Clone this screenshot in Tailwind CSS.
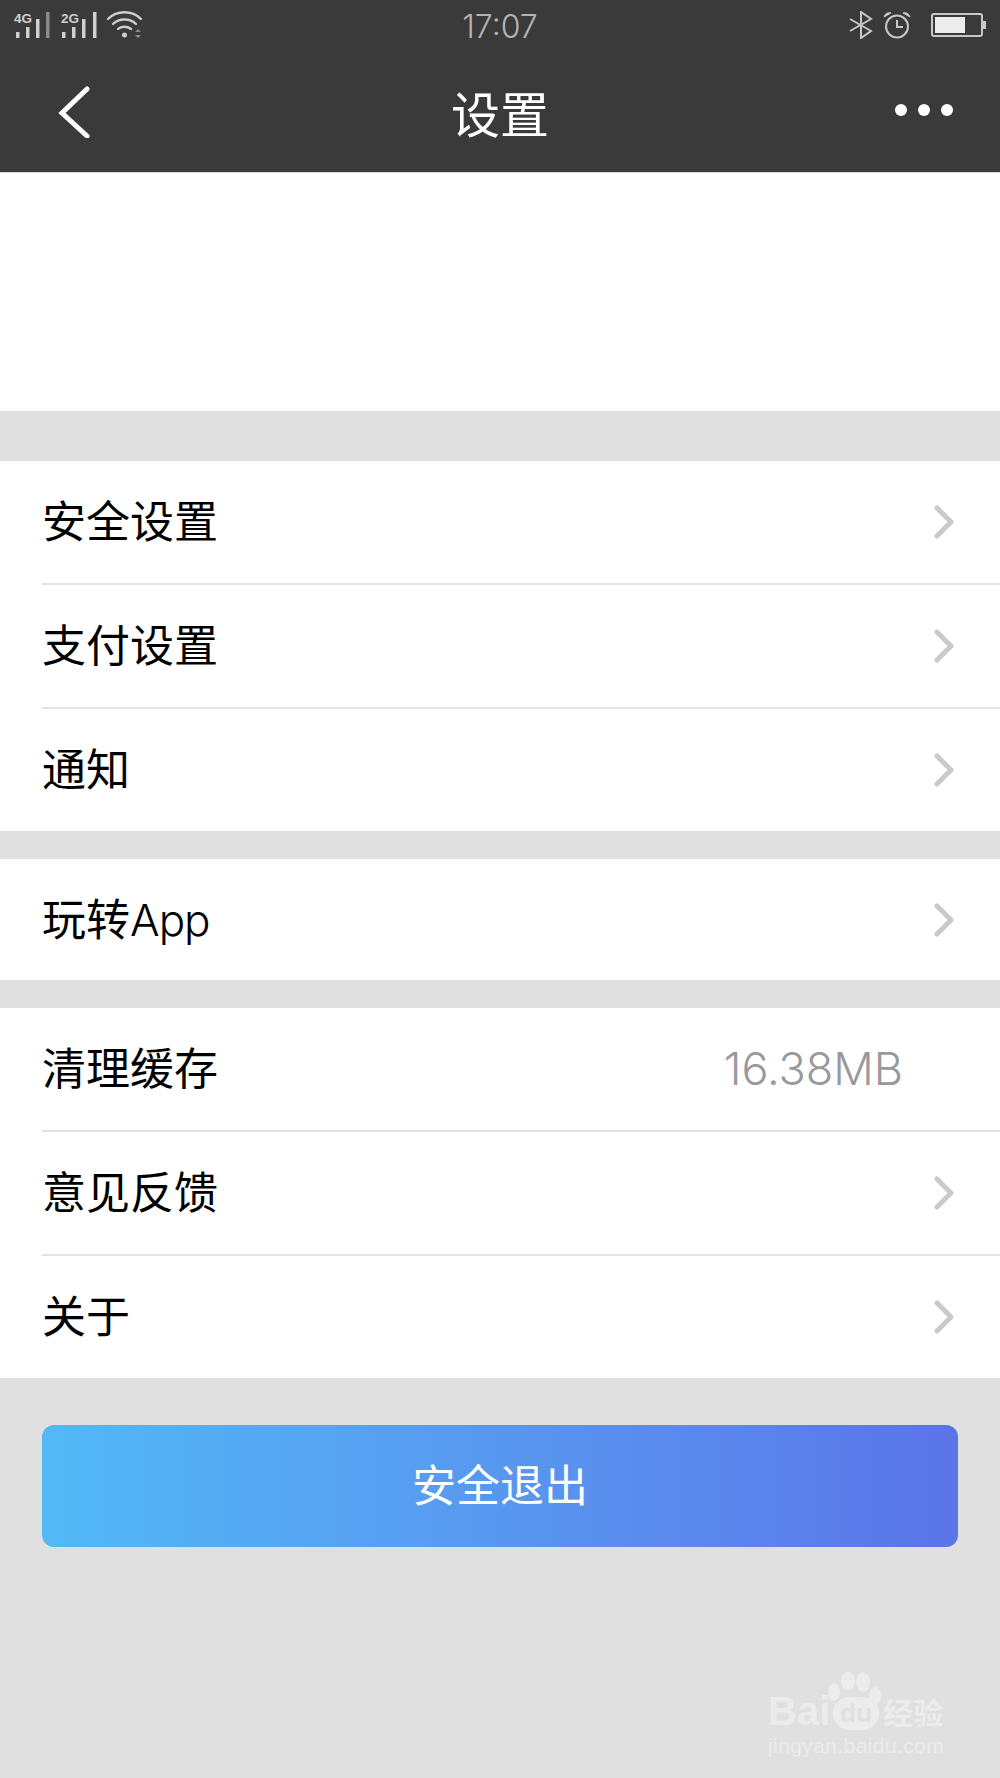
<!DOCTYPE html>
<html lang="zh">
<head>
    <meta charset="UTF-8">
    <title>设置</title>
    <script src="https://cdn.jsdelivr.net/npm/@tailwindcss/browser@4"></script>
</head>
<body>
<div class="relative w-[1000px] h-[1778px] bg-[#e0e0e0] overflow-hidden font-['Inter','Noto_Sans_CJK_SC',sans-serif]">

    <!-- status bar + title bar -->
    <header class="h-[173px] bg-[#3a3a3a] border-b border-[#d8d8d8] flex flex-col">
        <div class="h-[50px] px-[14px] flex items-center justify-between relative">
            <div class="flex items-center gap-[4px]">
                <svg width="88" height="30" viewBox="0 0 88 30" fill="#cfcfcf">
                    <text x="0" y="13" font-size="13.5" font-weight="600" font-family="Liberation Sans">4G</text>
                    <rect x="2" y="22" width="3.5" height="6"/><rect x="12" y="17" width="3.5" height="11"/><rect x="22" y="9" width="3.5" height="19"/><rect x="32" y="2" width="3.5" height="26" fill="#8a8a8a"/>
                    <text x="47" y="13" font-size="13.5" font-weight="600" font-family="Liberation Sans">2G</text>
                    <rect x="48" y="22" width="3.5" height="6"/><rect x="58" y="17" width="3.5" height="11"/><rect x="68" y="9" width="3.5" height="19"/><rect x="79" y="2" width="3.5" height="26"/>
                </svg>
                <svg width="38" height="30" viewBox="0 0 38 30" fill="none" stroke="#cfcfcf" stroke-width="2.4" stroke-linecap="round">
                    <path d="M2 9 C11 0 26 0 35 9"/>
                    <path d="M7 14 C13 8 24 8 30 14"/>
                    <path d="M12 19 C15 16 21 16 25 19"/>
                    <circle cx="18.5" cy="25" r="2.5" fill="#cfcfcf" stroke="none"/>
                    <path d="M29 22 l3 -3 l3 3 z M29 25 l3 3 l3 -3 z" fill="#8a8a8a" stroke="none"/>
                </svg>
            </div>
            <span class="absolute left-0 right-0 top-[8px] text-center text-[32px] leading-[38px] text-[#b4b4b4] font-light">17:07</span>
            <div class="flex items-center">
                <svg width="24" height="28" viewBox="0 0 24 28" fill="none" stroke="#c8c8c8" stroke-width="2">
                    <path d="M1 20 L22 8 L12 1 V27 L22 20 L1 8"/>
                </svg>
                <svg class="ml-[10px]" width="28" height="28" viewBox="0 0 28 28" fill="none" stroke="#c8c8c8" stroke-width="2">
                    <circle cx="14" cy="15.5" r="11"/>
                    <path d="M14 9 V16 H20"/>
                    <path d="M1 6 C2 2 6 1 8 2 Z M27 6 C26 2 22 1 20 2 Z" fill="#c8c8c8" stroke-width="1"/>
                </svg>
                <div class="ml-[20px] w-[52px] h-[24px] border-2 border-[#c8c8c8] rounded-[3px] p-[2px]">
                    <div class="w-[30px] h-full bg-[#ececec]"></div>
                </div>
                <div class="w-[3px] h-[8px] bg-[#c8c8c8]"></div>
            </div>
        </div>
        <div class="relative flex-1 flex items-center justify-center">
            <svg class="absolute left-[57px] top-[36px]" width="34" height="52" viewBox="0 0 34 52" fill="none" stroke="white" stroke-width="5" stroke-linecap="round">
                <path d="M30 3 L5 27 L30 50"/>
            </svg>
            <span class="text-[49px] leading-none text-white font-normal translate-y-[4px]">设置</span>
            <div class="absolute right-[47px] top-[54px] flex gap-[11px]">
                <span class="w-[12px] h-[12px] rounded-full bg-white"></span>
                <span class="w-[12px] h-[12px] rounded-full bg-white"></span>
                <span class="w-[12px] h-[12px] rounded-full bg-white"></span>
            </div>
        </div>
    </header>

    <div class="h-[238px] bg-white"></div>

    <section class="mt-[50px] bg-white">
        <div class="h-[124px] pl-[42px] flex">
            <div class="flex-1 border-b-2 border-[#e3e3e3] flex items-center justify-between pr-[46px] text-[44px] text-black">
                <span>安全设置</span>
                <svg width="20" height="34" viewBox="0 0 20 34" fill="none" stroke="#cacaca" stroke-width="5" stroke-linecap="round" stroke-linejoin="round"><path d="M3 3 L17 17 L3 31"/></svg>
            </div>
        </div>
        <div class="h-[124px] pl-[42px] flex">
            <div class="flex-1 border-b-2 border-[#e3e3e3] flex items-center justify-between pr-[46px] text-[44px] text-black">
                <span>支付设置</span>
                <svg width="20" height="34" viewBox="0 0 20 34" fill="none" stroke="#cacaca" stroke-width="5" stroke-linecap="round" stroke-linejoin="round"><path d="M3 3 L17 17 L3 31"/></svg>
            </div>
        </div>
        <div class="h-[122px] pl-[42px] pr-[46px] flex items-center justify-between text-[44px] text-black">
            <span>通知</span>
            <svg width="20" height="34" viewBox="0 0 20 34" fill="none" stroke="#cacaca" stroke-width="5" stroke-linecap="round" stroke-linejoin="round"><path d="M3 3 L17 17 L3 31"/></svg>
        </div>
    </section>

    <section class="mt-[28px] bg-white">
        <div class="h-[121px] pl-[42px] pr-[46px] flex items-center justify-between text-[44px] text-black">
            <span>玩转<span class="tracking-[-1px] font-light">App</span></span>
            <svg width="20" height="34" viewBox="0 0 20 34" fill="none" stroke="#cacaca" stroke-width="5" stroke-linecap="round" stroke-linejoin="round"><path d="M3 3 L17 17 L3 31"/></svg>
        </div>
    </section>

    <section class="mt-[28px] bg-white">
        <div class="h-[124px] pl-[42px] flex">
            <div class="flex-1 border-b-2 border-[#e3e3e3] flex items-center justify-between pr-[97px] text-[44px] text-black">
                <span>清理缓存</span>
                <span class="text-[45px] text-[#999999] font-light">16.38MB</span>
            </div>
        </div>
        <div class="h-[124px] pl-[42px] flex">
            <div class="flex-1 border-b-2 border-[#e3e3e3] flex items-center justify-between pr-[46px] text-[44px] text-black">
                <span>意见反馈</span>
                <svg width="20" height="34" viewBox="0 0 20 34" fill="none" stroke="#cacaca" stroke-width="5" stroke-linecap="round" stroke-linejoin="round"><path d="M3 3 L17 17 L3 31"/></svg>
            </div>
        </div>
        <div class="h-[122px] pl-[42px] pr-[46px] flex items-center justify-between text-[44px] text-black">
            <span>关于</span>
            <svg width="20" height="34" viewBox="0 0 20 34" fill="none" stroke="#cacaca" stroke-width="5" stroke-linecap="round" stroke-linejoin="round"><path d="M3 3 L17 17 L3 31"/></svg>
        </div>
    </section>

    <div class="mt-[47px] mx-[42px] h-[122px] rounded-[12px] bg-gradient-to-r from-[#52b9f6] to-[#5b74e8] flex items-center justify-center text-[44px] text-white">安全退出</div>

    <!-- watermark -->
    <div class="absolute left-[768px] top-[1672px] w-[180px] text-[#ececec]">
        <svg class="absolute left-[60px] top-0" width="54" height="34" viewBox="0 0 54 34" fill="#ececec">
            <ellipse cx="6" cy="20" rx="6" ry="9"/><ellipse cx="20" cy="9" rx="7" ry="9.5"/>
            <ellipse cx="35" cy="10" rx="7" ry="10"/><ellipse cx="47" cy="24" rx="6" ry="9"/>
        </svg>
        <div class="pt-[20px] flex items-end text-[40px] leading-[38px] font-bold font-['Liberation_Sans']">
            <span>Bai</span>
            <span class="ml-[3px] w-[46px] h-[33px] rounded-[17px] bg-[#ececec] text-[#e0e0e0] text-[26px] leading-[33px] text-center">du</span>
            <span class="ml-[4px] text-[30px] font-['Noto_Sans_CJK_SC']">经验</span>
        </div>
        <div class="mt-[3px] text-[21px] leading-[26px] tracking-[0.4px] font-['Liberation_Sans'] whitespace-nowrap">jingyan.baidu.com</div>
    </div>
</div>
</body>
</html>
